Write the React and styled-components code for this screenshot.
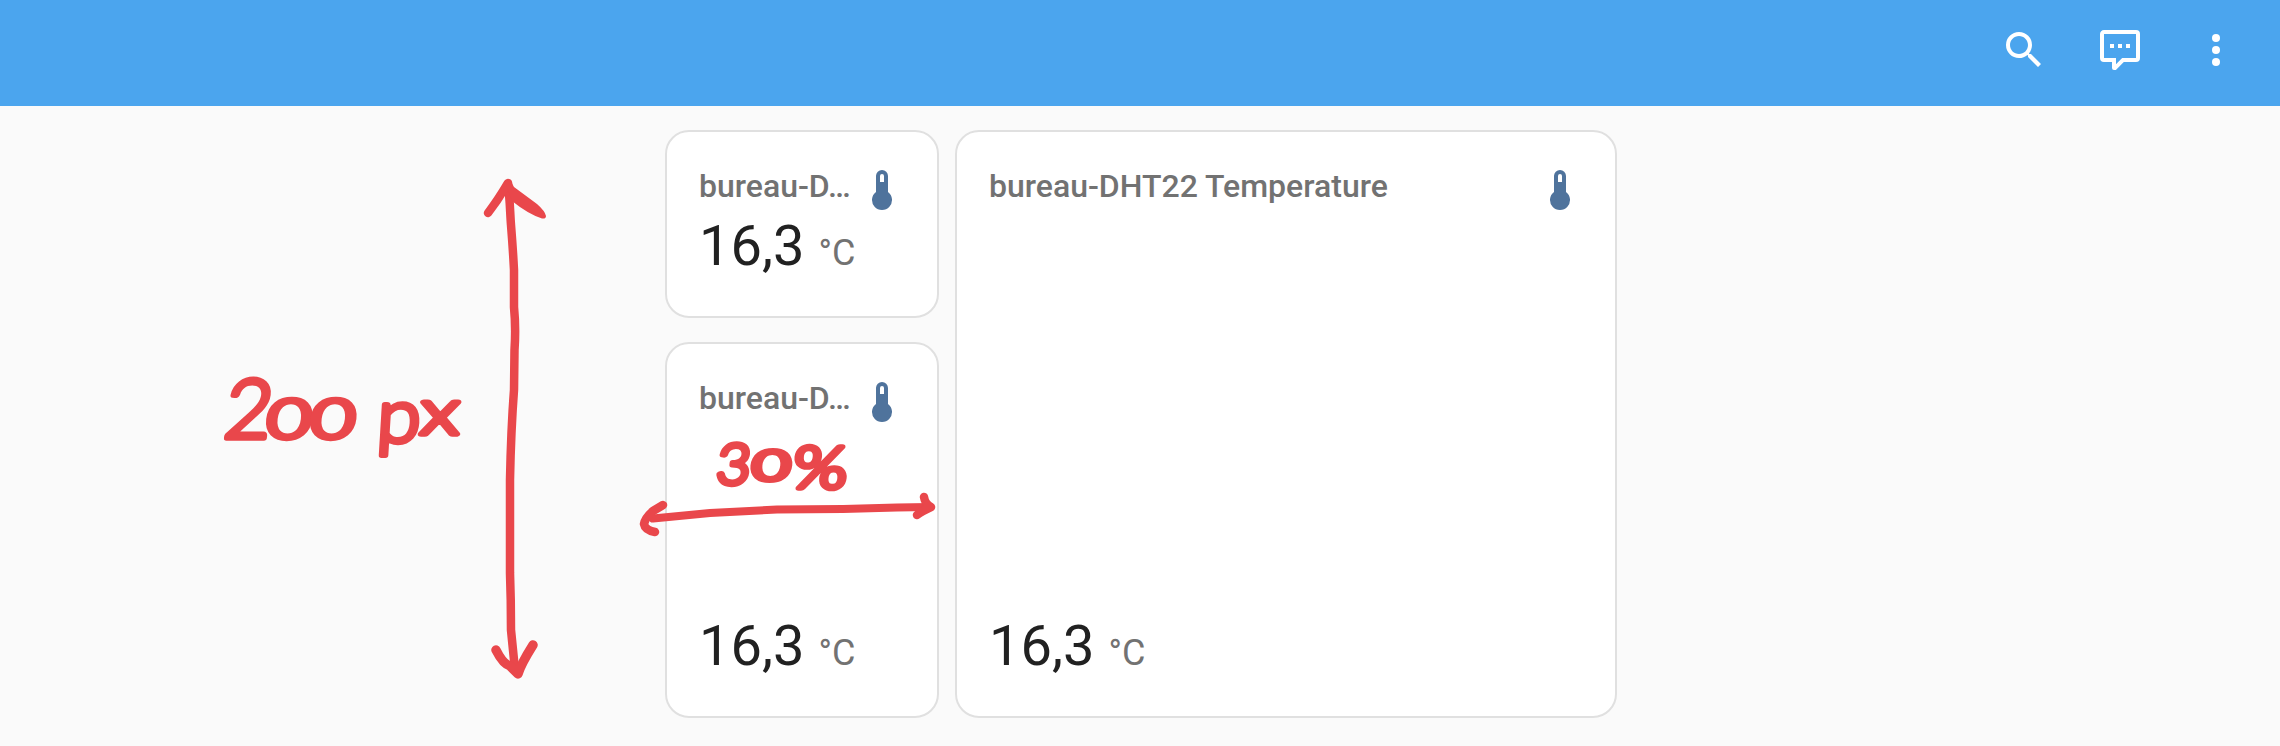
import React from 'react';
import styled, { createGlobalStyle } from 'styled-components';

const GlobalStyle = createGlobalStyle`
  * { box-sizing: border-box; }
  body {
    margin: 0;
    background: #fafafa;
    font-family: Roboto, 'Liberation Sans', sans-serif;
    -webkit-font-smoothing: antialiased;
  }
`;

const Page = styled.div`
  position: relative;
  height: 746px;
  overflow: hidden;
`;

const Header = styled.header`
  display: flex;
  justify-content: flex-end;
  gap: 48px;
  height: 106px;
  padding: 26px 40px 0 0;
  background: #4ba5ee;
  color: #fff;
`;

const Icon = styled.svg`
  display: block;
  flex: none;
  width: 48px;
  height: 48px;
  fill: currentColor;
`;

const Board = styled.main`
  display: flex;
  gap: 16px;
  width: 952px;
  height: 588px;
  margin: 24px 0 0 665px;
`;

const Column = styled.div`
  display: flex;
  flex-direction: column;
  gap: 24px;
  width: 274px;
`;

const Card = styled.section`
  display: flex;
  flex-direction: column;
  justify-content: ${({ $grow }) => ($grow ? 'space-between' : 'flex-start')};
  flex: ${({ $grow }) => ($grow ? '1' : 'none')};
  height: ${({ $height }) => $height || 'auto'};
  min-width: 0;
  padding: 16px 31px 35px 32px;
  border: 2px solid #e0e0e0;
  border-radius: 24px;
  background: #fff;
`;

const CardHeader = styled.div`
  display: flex;
  justify-content: space-between;
  height: 80px;
`;

const Name = styled.div`
  min-width: 0;
  color: #727272;
  font-size: 32px;
  font-weight: 500;
  line-height: 77px;
  white-space: nowrap;
`;

const StateIcon = styled.div`
  padding-top: 18px;
  color: #4f739c;
`;

const Reading = styled.div`
  margin-top: -8px;
  color: #212121;
  font-size: 56px;
  line-height: 56px;
  white-space: nowrap;
`;

const Value = styled.span`
  margin-right: 14px;
`;

const Unit = styled.span`
  color: #727272;
  font-size: 36px;
`;

const Ink = styled.svg`
  position: absolute;
  inset: 0;
  width: 2280px;
  height: 746px;
  pointer-events: none;
`;

const Stroke = styled.path`
  fill: none;
  stroke: #e9474b;
  stroke-width: ${({ $width }) => $width || 8.5}px;
  stroke-linecap: round;
  stroke-linejoin: round;
`;

const Note = styled.text`
  fill: #e9474b;
  stroke: #e9474b;
  stroke-width: 5.5px;
  stroke-linejoin: round;
  font-family: Lato, sans-serif;
  font-weight: 300;
`;

const SearchIcon = () => (
  <Icon viewBox="0 0 24 24">
    <path d="M9.5,3A6.5,6.5 0 0,1 16,9.5C16,11.11 15.41,12.59 14.44,13.73L14.71,14H15.5L20.5,19L19,20.5L14,15.5V14.71L13.73,14.44C12.59,15.41 11.11,16 9.5,16A6.5,6.5 0 0,1 3,9.5A6.5,6.5 0 0,1 9.5,3M9.5,5C7,5 5,7 5,9.5C5,12 7,14 9.5,14C12,14 14,12 14,9.5C14,7 12,5 9.5,5Z" />
  </Icon>
);

const AssistIcon = () => (
  <Icon viewBox="0 0 24 24">
    <path d="M9,22A1,1 0 0,1 8,21V18H4A2,2 0 0,1 2,16V4C2,2.89 2.9,2 4,2H20A2,2 0 0,1 22,4V16A2,2 0 0,1 20,18H13.9L10.2,21.71C10,21.9 9.75,22 9.5,22V22H9M10,16V19.08L13.08,16H20V4H4V16H10M17,11H15V9H17V11M13,11H11V9H13V11M9,11H7V9H9V11Z" />
  </Icon>
);

const MenuIcon = () => (
  <Icon viewBox="0 0 24 24">
    <circle cx="12" cy="6" r="2" />
    <circle cx="12" cy="12" r="2" />
    <circle cx="12" cy="18" r="2" />
  </Icon>
);

const ThermometerIcon = () => (
  <Icon viewBox="0 0 24 24">
    <path d="M15 13V5A3 3 0 0 0 9 5V13A5 5 0 1 0 15 13M12 4A1 1 0 0 1 13 5V8H11V5A1 1 0 0 1 12 4Z" />
  </Icon>
);

function EntityCard({ name, grow, height }) {
  return (
    <Card $grow={grow} $height={height}>
      <CardHeader>
        <Name>{name}</Name>
        <StateIcon>
          <ThermometerIcon />
        </StateIcon>
      </CardHeader>
      <Reading>
        <Value>16,3</Value>
        <Unit>°C</Unit>
      </Reading>
    </Card>
  );
}

function Annotations() {
  return (
    <Ink viewBox="0 0 2280 746">
      {/* height arrow */}
      <Stroke d="M508 184 C510 200 510 212 511 225 Q513 250 514 270 L514 307 Q516 328 514.500 350 L514 390 Q511 430 510 480 L510 573 Q511 600 511 630 L515 670" />
      <Stroke d="M488 213 Q498 200 508 183" />
      <path
        fill="#e9474b"
        d="M505 181 Q510 178 514 187 L537 204 Q545 211 546 216 Q546 219 542 218.500 Q528 214 512 201 Z"
      />
      <Stroke $width={9.5} d="M496 650 Q503 664 510 666 L518 674 Q521 664 533 645" />
      {/* width arrow */}
      <Stroke $width={8} d="M653 518.500 L710 513 L777 509.500 L843 509 L897 507.500 L930 507" />
      <Stroke d="M663 505 L653 511 Q645 518 644 524 Q645 530 655 532" />
      <Stroke d="M924 497 Q925 504 931 507 Q922 511 917 515" />
      <Note transform="matrix(1 0 -0.12 1 222 438)">
        <tspan x="0" y="0" fontSize="82">2</tspan>
        <tspan x="43" y="0" fontSize="54" textLength="88" lengthAdjust="spacingAndGlyphs">00</tspan>
      </Note>
      <Note transform="matrix(1.05 0 -0.06 1 376 442)">
        <tspan x="0" y="0" fontSize="75">p</tspan>
        <tspan x="41" y="-8" fontSize="64" textLength="37" lengthAdjust="spacingAndGlyphs">x</tspan>
      </Note>
      <Note transform="matrix(1.05 0 -0.1 1 715 484)">
        <tspan x="0" y="0" fontSize="56">3</tspan>
        <tspan x="34" y="-4" fontSize="41" textLength="36" lengthAdjust="spacingAndGlyphs">0</tspan>
        <tspan x="73" y="4" fontSize="58" textLength="52" lengthAdjust="spacingAndGlyphs">%</tspan>
      </Note>
    </Ink>
  );
}

export default function App() {
  return (
    <Page>
      <GlobalStyle />
      <Header>
        <SearchIcon />
        <AssistIcon />
        <MenuIcon />
      </Header>
      <Board>
        <Column>
          <EntityCard name="bureau-D…" height="188px" />
          <EntityCard name="bureau-D…" grow />
        </Column>
        <EntityCard name="bureau-DHT22 Temperature" grow />
      </Board>
      <Annotations />
    </Page>
  );
}
